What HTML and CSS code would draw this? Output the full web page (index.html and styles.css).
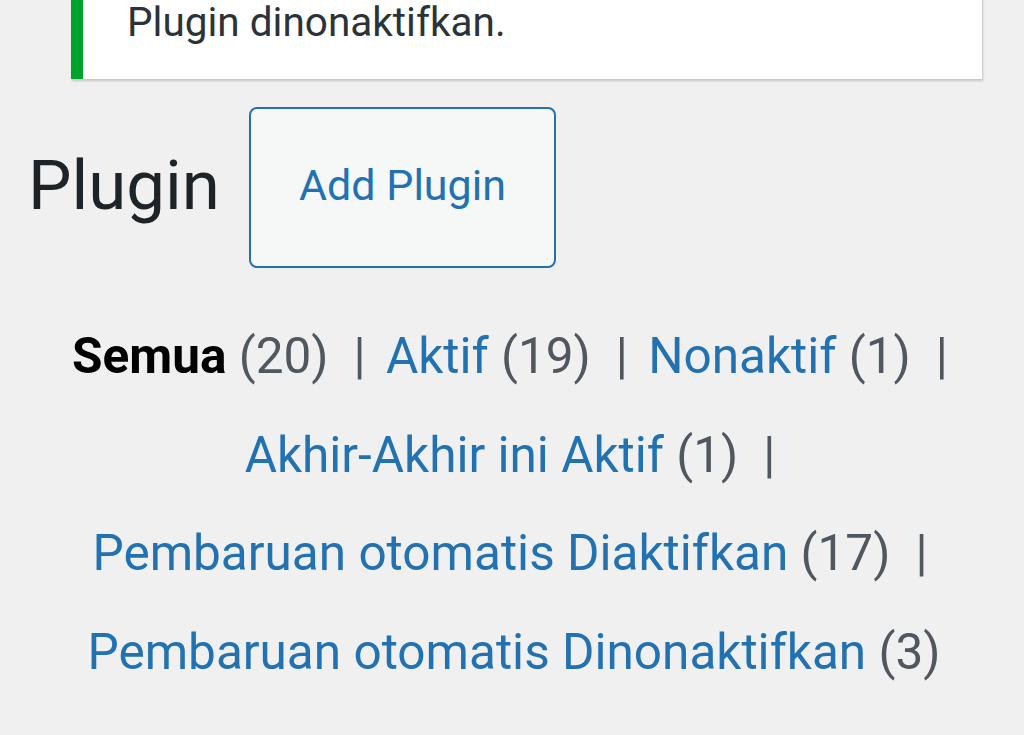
FILE: index.html
```html
<!DOCTYPE html>
<html lang="id">
<head>
<meta charset="utf-8">
<title>Plugin</title>
<link rel="stylesheet" href="styles.css">
</head>
<body>
<div class="notice">
  <p>Plugin dinonaktifkan.</p>
</div>
<div class="head-row">
  <h1 class="title">Plugin</h1>
  <a class="add-btn" href="#">Add Plugin</a>
</div>
<ul class="subsubsub">
  <li><a class="current" href="#">Semua <span class="count">(20)</span></a><span class="sep">|</span></li>
  <li><a href="#">Aktif <span class="count">(19)</span></a><span class="sep">|</span></li>
  <li><a href="#">Nonaktif <span class="count">(1)</span></a><span class="sep">|</span></li>
  <li><a href="#">Akhir-Akhir ini Aktif <span class="count">(1)</span></a><span class="sep">|</span></li>
  <li><a href="#">Pembaruan otomatis Diaktifkan <span class="count">(17)</span></a><span class="sep">|</span></li>
  <li><a href="#">Pembaruan otomatis Dinonaktifkan <span class="count">(3)</span></a></li>
</ul>
</body>
</html>
```
FILE: styles.css
```css
html, body {
  margin: 0;
  padding: 0;
  background: #f0f0f1;
  font-family: Roboto, "Noto Sans", sans-serif;
  color: #1d2327;
  overflow: hidden;
}

.notice {
  margin: -40px 42px 0 71px;
  padding: 32px 20px 25px 44px;
  background: #fff;
  border-left: 12px solid #00a32a;
  box-shadow: 1px 2px 2px rgba(0, 0, 0, 0.18);
}

.notice p {
  margin: 0;
  font-size: 40.5px;
  line-height: 61.5px;
  color: #2c3338;
}

.head-row {
  display: flex;
  align-items: flex-start;
  margin: 28px 0 0 28px;
  gap: 29px;
}

.title {
  margin: 33px 0 0;
  font-size: 69px;
  font-weight: 400;
  line-height: 91px;
  color: #1d2327;
}

.add-btn {
  box-sizing: border-box;
  width: 307px;
  height: 161px;
  display: flex;
  align-items: center;
  justify-content: center;
  padding-bottom: 4px;
  border: 2px solid #2271b1;
  border-radius: 8px;
  background: #f6f7f7;
  color: #2271b1;
  font-size: 43px;
  text-decoration: none;
}

.subsubsub {
  list-style: none;
  margin: 39.5px 0 0;
  padding: 0 10px 0 14px;
  text-align: center;
  font-size: 49.5px;
  line-height: 98.7px;
}

.subsubsub li {
  display: inline;
  white-space: nowrap;
}

.subsubsub a {
  color: #2271b1;
  text-decoration: none;
}

.subsubsub a.current {
  color: #000;
  font-weight: 700;
}

.subsubsub .count {
  color: #50575e;
  font-weight: 400;
}

.subsubsub .sep {
  color: #50575e;
  margin: 0 8px 0 25px;
}
```
